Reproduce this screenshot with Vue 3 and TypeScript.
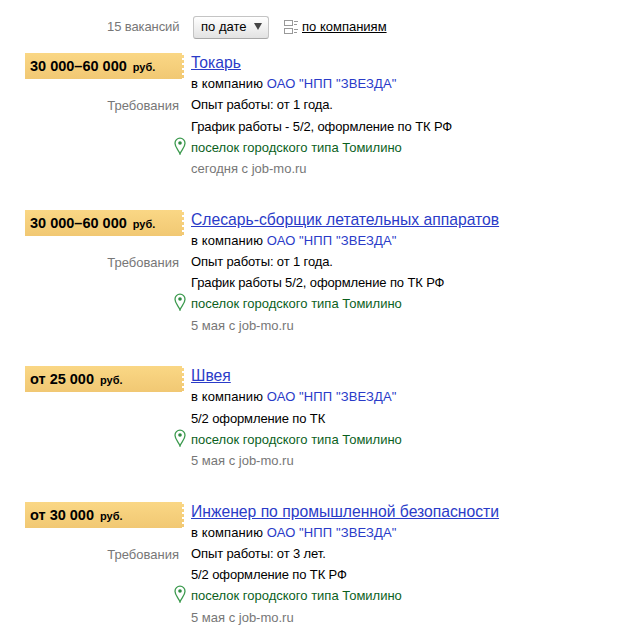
<template>
  <div class="page">
    <div class="toolbar">
      <span class="count">15 вакансий</span>
      <button class="sort">по дате <span class="arrow"></span></button>
      <svg class="group-icon" width="14" height="14" viewBox="0 0 14 14">
        <rect x="0.5" y="0.5" width="8" height="5" fill="none" stroke="#999" />
        <rect x="0.5" y="8.500" width="8" height="5" fill="none" stroke="#999" />
        <path d="M10 1.500h4M10 4.500h3M10 9.500h4M10 12.500h3" stroke="#999" fill="none" />
      </svg>
      <a class="group-link" href="#">по компаниям</a>
    </div>

    <div v-for="job in jobs" :key="job.title" class="job">
      <div class="side">
        <div class="salary">
          <b>{{ job.salary }}</b>
          <span class="currency">руб.</span>
        </div>
        <div class="side-label" v-if="job.requirements">Требования</div>
      </div>
      <div class="main">
        <a class="title" href="#">{{ job.title }}</a>
        <div class="line employer">в компанию <a class="company" href="#">ОАО "НПП "ЗВЕЗДА"</a></div>
        <div v-for="text in job.details" :key="text" class="line detail">{{ text }}</div>
        <div class="line place">
          <svg class="pin" width="12" height="18" viewBox="0 0 12 18">
            <path d="M6 17C5 13.500 1 10.500 1 6.200a5 5 0 0 1 10 0C11 10.500 7 13.500 6 17z" fill="#fff" stroke="#3c9a4e" stroke-width="1.300" />
            <circle cx="6" cy="6" r="1.800" fill="#2f8a42" />
          </svg>
          поселок городского типа Томилино
        </div>
        <div class="line source">{{ job.source }}</div>
      </div>
    </div>
  </div>
</template>

<script setup lang="ts">
interface Job {
  salary: string
  title: string
  requirements: boolean
  details: string[]
  source: string
}

const jobs: Job[] = [
  {
    salary: '30 000–60 000',
    title: 'Токарь',
    requirements: true,
    details: ['Опыт работы: от 1 года.', 'График работы - 5/2, оформление по ТК РФ'],
    source: 'сегодня с job-mo.ru',
  },
  {
    salary: '30 000–60 000',
    title: 'Слесарь-сборщик летательных аппаратов',
    requirements: true,
    details: ['Опыт работы: от 1 года.', 'График работы 5/2, оформление по ТК РФ'],
    source: '5 мая с job-mo.ru',
  },
  {
    salary: 'от 25 000',
    title: 'Швея',
    requirements: false,
    details: ['5/2 оформление по ТК'],
    source: '5 мая с job-mo.ru',
  },
  {
    salary: 'от 30 000',
    title: 'Инженер по промышленной безопасности',
    requirements: true,
    details: ['Опыт работы: от 3 лет.', '5/2 оформление по ТК РФ'],
    source: '5 мая с job-mo.ru',
  },
]
</script>

<style>
html,
body {
  margin: 0;
  background: #fff;
}
</style>

<style scoped>
.page {
  width: 638px;
  height: 634px;
  overflow: hidden;
  font-family: "Liberation Sans", Arial, sans-serif;
  font-size: 13px;
  color: #000;
}
.toolbar {
  display: flex;
  align-items: center;
  height: 26px;
  margin-top: 14px;
  padding-left: 107px;
}
.count {
  color: #777;
  width: 86px;
  letter-spacing: -0.1px;
  margin-top: -2px;
}
.sort {
  display: flex;
  align-items: center;
  box-sizing: border-box;
  width: 76px;
  height: 23px;
  padding: 0 0 1px 7px;
  margin-right: 15px;
  font: inherit;
  color: #000;
  background: linear-gradient(#fff, #e2e2e2);
  border: 1px solid #c4c4c4;
  border-bottom-color: #a8a8a8;
  border-radius: 3px;
}
.arrow {
  width: 0;
  height: 0;
  margin-left: 8px;
  border-left: 4px solid transparent;
  border-right: 4px solid transparent;
  border-top: 7px solid #444;
}
.group-icon {
  margin-right: 4px;
  margin-top: -1px;
}
.group-link {
  color: #000;
  margin-top: -2px;
}
.job {
  display: flex;
  margin-top: 13px;
  margin-bottom: 30.5px;
}
.side {
  width: 159px;
  margin-left: 25px;
  margin-right: 7px;
  flex: none;
}
.salary {
  position: relative;
  box-sizing: border-box;
  height: 26px;
  line-height: 26px;
  padding-left: 5px;
  background: linear-gradient(#fad785, #f1c873);
  font-size: 14.5px;
}
.salary::after {
  content: "";
  position: absolute;
  top: 0;
  right: 0;
  width: 2px;
  height: 100%;
  background: repeating-linear-gradient(#fff 0 2px, transparent 2px 5px);
}
.currency {
  font-size: 11px;
  font-weight: bold;
  margin-left: 6px;
}
.side-label {
  margin-top: 16px;
  text-align: right;
  padding-right: 5px;
  color: #777;
  line-height: 21px;
}
.main {
  flex: 1;
}
.title {
  display: block;
  height: 20.2px;
  line-height: 19px;
  font-size: 15.7px;
  color: #2a3bc8;
}
.line {
  position: relative;
  line-height: 21px;
  height: 21.2px;
}
.employer {
  letter-spacing: 0.1px;
}
.detail {
  letter-spacing: -0.12px;
}
.company {
  color: #2a3bc8;
  text-decoration: none;
  letter-spacing: 0.12px;
}
.place {
  color: #0b5f1d;
}
.pin {
  position: absolute;
  left: -17px;
  top: 0;
}
.source {
  color: #777;
}
</style>
